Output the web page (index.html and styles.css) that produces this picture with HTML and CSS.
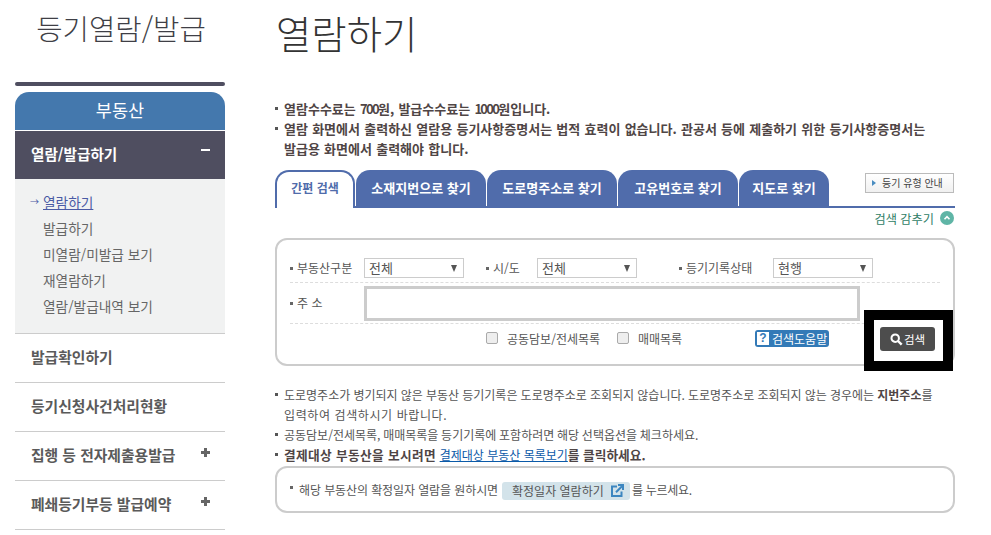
FILE: index.html
```html
<!DOCTYPE html>
<html lang="ko">
<head>
<meta charset="utf-8">
<title>열람하기</title>
<link rel="stylesheet" href="styles.css">
</head>
<body>
<div class="page">
  <aside class="side">
    <h2 class="side-title">등기열람/발급</h2>
    <div class="side-bar"></div>
    <div class="side-head">부동산</div>
    <div class="menu-open"><span>열람/발급하기</span><span class="sign minus"></span></div>
    <ul class="submenu">
      <li class="current"><span class="arrow">→</span><a>열람하기</a></li>
      <li>발급하기</li>
      <li>미열람/미발급 보기</li>
      <li>재열람하기</li>
      <li>열람/발급내역 보기</li>
    </ul>
    <div class="menu-row"><span>발급확인하기</span></div>
    <div class="menu-row"><span>등기신청사건처리현황</span></div>
    <div class="menu-row"><span>집행 등 전자제출용발급</span><span class="sign plus"></span></div>
    <div class="menu-row"><span>폐쇄등기부등 발급예약</span><span class="sign plus"></span></div>
  </aside>
  <main class="main">
    <h1 class="title">열람하기</h1>
    <ul class="notes top-notes">
      <li>열람수수료는 <span class="num">700</span>원, 발급수수료는 <span class="num">1000</span>원입니다.</li>
      <li>열람 화면에서 출력하신 열람용 등기사항증명서는 법적 효력이 없습니다. 관공서 등에 제출하기 위한 등기사항증명서는<br>발급용 화면에서 출력해야 합니다.</li>
    </ul>
    <div class="tabs">
      <div class="tab active">간편 검색</div>
      <div class="tab w130">소재지번으로 찾기</div>
      <div class="tab w130">도로명주소로 찾기</div>
      <div class="tab w120">고유번호로 찾기</div>
      <div class="tab w90">지도로 찾기</div>
      <a class="guide"><i></i>등기 유형 안내</a>
    </div>
    <div class="hide-row">검색 감추기<span class="up"><svg viewBox="0 0 14 14" width="14" height="14"><circle cx="7" cy="7" r="7" fill="#5fb5a6"/><path d="M4.5 8.2 7 5.6l2.5 2.6" fill="none" stroke="#fff" stroke-width="1.6"/></svg></span></div>
    <section class="search">
      <div class="row first">
        <label class="lab l1">부동산구분</label>
        <div class="sel s1">전체</div>
        <label class="lab l2">시/도</label>
        <div class="sel s2">전체</div>
        <label class="lab l3">등기기록상태</label>
        <div class="sel s3">현행</div>
      </div>
      <div class="row second">
        <label class="lab l1 addr-label">주 소</label>
        <div class="addr"></div>
      </div>
      <div class="row third">
        <span class="chk"></span><span class="chk-t t1">공동담보/전세목록</span>
        <span class="chk"></span><span class="chk-t t2">매매목록</span>
        <span class="help"><b>?</b>검색도움말</span>
      </div>
      <div class="focus">
        <div class="btn"><svg viewBox="0 0 14 14" width="13" height="13"><circle cx="5.6" cy="5.6" r="4" fill="none" stroke="#fff" stroke-width="2.2"/><path d="M8.6 8.6 12.6 12.6" stroke="#fff" stroke-width="2.6"/></svg>검색</div>
      </div>
    </section>
    <ul class="notes plain">
      <li><span class="tight">도로명주소가 병기되지 않은 부동산 등기기록은 도로명주소로 조회되지 않습니다. 도로명주소로 조회되지 않는 경우에는 <b>지번주소</b>를</span><br><span class="wide">입력하여 검색하시기 바랍니다.</span></li>
      <li class="option">공동담보/전세목록, 매매목록을 등기기록에 포함하려면 해당 선택옵션을 체크하세요.</li>
      <li class="strong"><b><span class="lead">결제대상 부동산을 보시려면</span> <a class="link">결제대상 부동산 목록보기</a>를 클릭하세요.</b></li>
    </ul>
    <div class="confirm">
      <span class="dot"></span><span class="ask">해당 부동산의 확정일자 열람을 원하시면</span>
      <span class="pill">확정일자 열람하기<svg viewBox="0 0 14 14" width="14" height="14"><path d="M7 2.5H2v9.5h9.5V7.5" fill="none" stroke="#3c86c0" stroke-width="2"/><path d="M6 8.2 12 2.2M8 1h5v5" fill="none" stroke="#3c86c0" stroke-width="2"/></svg></span><span class="tail">를 누르세요.</span>
    </div>
  </main>
</div>
</body>
</html>
```

FILE: styles.css
```css
* { box-sizing: border-box; }
html, body { margin: 0; padding: 0; background: #fff; }
body { font-family: "Noto Sans CJK KR", "Noto Sans", sans-serif; color: #555; font-size: 13px; overflow: hidden; }
ul { list-style: none; margin: 0; padding: 0; }
.page { display: flex; width: 991px; height: 535px; padding-left: 15px; gap: 50px; overflow: hidden; }

.side { width: 210px; flex: none; }
.side-title { margin: 0; height: 82px; padding-top: 5px; padding-left: 2px; font-weight: 300; font-size: 28.7px; line-height: 46px; color: #3f3f46; text-align: center; }
.side-bar { height: 4px; margin-bottom: 6px; background: #4f4e60; border-radius: 2px; }
.side-head { height: 38px; background: #4478ad; color: #fff; font-size: 17.5px; line-height: 36px; text-align: center; border-radius: 14px 14px 0 0; margin-bottom: 1px; }
.menu-open { height: 48px; background: #4f4e60; color: #fff; font-weight: 700; font-size: 14.6px; display: flex; align-items: center; justify-content: space-between; padding: 0 15px 4px 16px; }
.submenu { height: 155px; background: #f1f2f2; padding-top: 10px; border-bottom: 1px solid #ccc; font-size: 13.7px; color: #666; }
.submenu li { height: 26px; line-height: 26px; padding-left: 28px; position: relative; }
.submenu .current { color: #4a5aa5; }
.current a { text-decoration: underline; }
.arrow { position: absolute; left: 15px; font-size: 9px; }
.menu-row { height: 49px; border-bottom: 1px solid #ccc; display: flex; align-items: center; justify-content: space-between; padding: 0 15px 4px 16px; font-weight: 700; font-size: 14.8px; color: #5a5a5a; }
.sign { display: block; width: 9px; height: 9px; position: relative; margin-top: -4px; }
.sign::before { content: ""; position: absolute; left: 0; right: 0; top: 3px; height: 3px; background: #666; }
.minus { margin-top: -6px; }
.minus::before { background: #fff; height: 2px; }
.plus::after { content: ""; position: absolute; top: 0; bottom: 0; left: 3px; width: 3px; background: #666; }

.main { width: 680px; flex: none; }
.title { margin: 0; height: 99px; padding: 4px 0 0 1px; font-weight: 300; font-size: 38.4px; line-height: 56px; color: #333; }
.notes li { position: relative; padding-left: 9px; line-height: 20px; }
.notes li::before { content: ""; position: absolute; left: 0; top: 8px; width: 3px; height: 3px; background: #555; }
.top-notes { font-weight: 700; font-size: 13px; color: #4f4545; height: 71px; word-spacing: 0.6px; }
.num { letter-spacing: -1.7px; }

.tabs { display: flex; height: 38px; border-bottom: 2px solid #506cab; gap: 1px; position: relative; }
.tab { width: 80px; height: 36px; background: #506cab; color: #fff; font-weight: 700; font-size: 13px; line-height: 36px; text-align: center; border-radius: 14px 14px 0 0; }
.tab.active { height: 38px; background: #fff; color: #506cab; border: 2px solid #506cab; border-bottom: 0; line-height: 32px; font-size: 12px; }
.tab.w130 { width: 130px; }
.tab.w120 { width: 120px; }
.tab.w90 { width: 90px; }
.guide { position: absolute; right: 1px; top: 3px; width: 89px; height: 20px; border: 1px solid #bbb; background: linear-gradient(#fff, #f0f0f0); font-size: 10px; line-height: 18px; color: #444; padding-left: 16px; }
.guide i { position: absolute; left: 6px; top: 6px; border-left: 4px solid #4a8cc0; border-top: 3px solid transparent; border-bottom: 3px solid transparent; }

.hide-row { height: 30px; display: flex; justify-content: flex-end; align-items: flex-start; gap: 6px; padding: 2px 1px 0 0; font-size: 12.2px; line-height: 18px; color: #2f7d66; }
.up { display: block; padding-top: 1px; height: 16px; }

.search { position: relative; height: 128px; border: 2px solid #ccc; border-radius: 12px; padding: 0 13px; font-size: 12px; color: #555; }
.row { display: flex; align-items: center; }
.first { height: 43px; padding-top: 18px; border-bottom: 1px dashed #ddd; align-items: flex-start; }
.lab { position: relative; padding-left: 7px; line-height: 20px; flex: none; }
.lab::before { content: ""; position: absolute; left: 0; top: 9px; width: 3px; height: 3px; background: #666; }
.l1 { width: 74px; }
.l2 { width: 51px; margin-left: 22px; }
.l3 { width: 94px; margin-left: 42px; }
.sel { width: 100px; height: 20px; border: 1px solid #ccc; font-size: 13px; line-height: 18px; padding-left: 4px; position: relative; flex: none; }
.sel::after { content: ""; position: absolute; right: 6px; top: 6px; border-top: 7px solid #555; border-left: 3.5px solid transparent; border-right: 3.5px solid transparent; }
.second { height: 41px; border-bottom: 1px dashed #ddd; padding: 3px 0 2px; }
.addr-label { margin-top: -2px; }
.addr { width: 496px; height: 35px; border: 3px solid #ccc; background: #fff; }
.third { height: 28px; padding-left: 196px; }
.chk { width: 12px; height: 12px; border: 1px solid #aaa; border-radius: 2px; background: #eee; flex: none; }
.chk-t { margin-left: 9px; flex: none; }
.t1 { width: 110px; }
.t2 { width: 117px; }
.help { display: inline-flex; align-items: center; height: 17px; background: #337ab7; color: #fff; border-radius: 3px; font-size: 12px; padding: 0 2px; width: 74px; white-space: nowrap; }
.help b { display: block; width: 12px; height: 13px; margin-right: 3px; background: #fff; color: #337ab7; font: 700 12px/13px "Liberation Sans", sans-serif; text-align: center; flex: none; }
.focus { position: absolute; right: 0; top: 70px; width: 89px; height: 61px; border: 10px solid #000; background: #fff; padding: 7px 6px; }
.btn { width: 55px; height: 24px; background: #4d4d4d; border-radius: 3px; color: #fff; font-size: 11.5px; display: flex; align-items: center; justify-content: center; gap: 1px; }

.plain { margin-top: 19px; font-size: 12px; color: #555; }
.plain b { color: #4f4545; }
.tight { word-spacing: -0.2px; }
.wide { letter-spacing: 0.6px; }
.option { word-spacing: -0.6px; }
.strong { font-size: 12.7px; }
.lead { letter-spacing: 0.35px; }
.link { color: #0b5aa8; text-decoration: underline; font-weight: 400; font-size: 12px; }
.confirm { height: 47px; margin-top: 1px; border: 2px solid #ccc; border-radius: 12px; padding: 0 0 0 13px; display: flex; align-items: center; font-size: 12px; color: #555; }
.dot { width: 3px; height: 3px; background: #666; margin-right: 6px; margin-top: -5px; flex: none; }
.ask { letter-spacing: -0.1px; }
.tail { letter-spacing: -0.3px; }
.pill { display: inline-flex; align-items: center; gap: 6px; width: 128px; height: 18px; padding-left: 10px; margin: 2px 2px 0 4px; background: #d3e3ea; border-radius: 3px; flex: none; }
```
